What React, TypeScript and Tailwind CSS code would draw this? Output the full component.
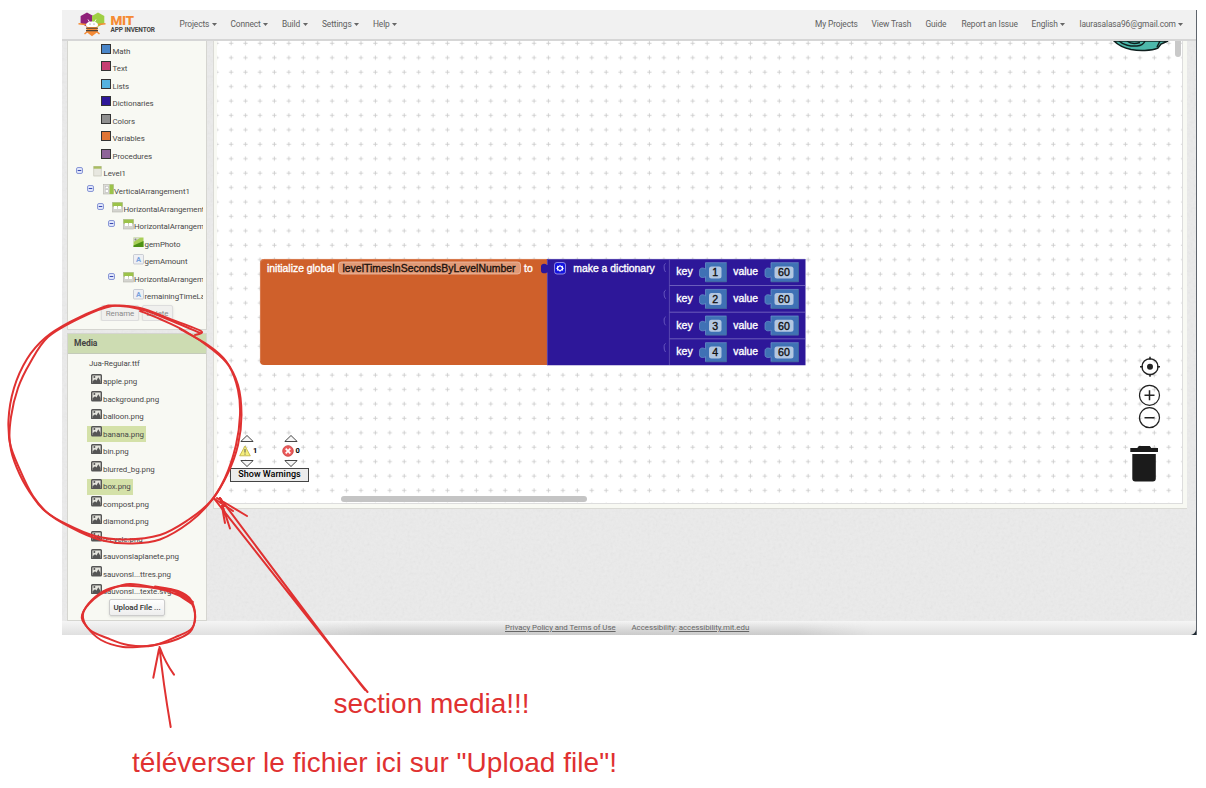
import React from "react";

type Pt = [number, number];

function smooth(p: Pt[]): string {
  let d = `M${p[0][0]} ${p[0][1]}`;
  for (let i = 0; i < p.length - 1; i++) {
    const a = p[i - 1] || p[i];
    const b = p[i];
    const c = p[i + 1];
    const e = p[i + 2] || c;
    d += `C${b[0] + (c[0] - a[0]) / 6} ${b[1] + (c[1] - a[1]) / 6} ${c[0] - (e[0] - b[0]) / 6} ${c[1] - (e[1] - b[1]) / 6} ${c[0]} ${c[1]}`;
  }
  return d;
}

const Caret = () => (
  <svg width="5" height="3" viewBox="0 0 5 3" className="ml-[2.5px] mt-px shrink-0">
    <path d="M0 0h5L2.5 3z" fill="#666" />
  </svg>
);

function NavItem({ label, width, caret }: { label: string; width: string; caret?: boolean }) {
  return (
    <div className={`flex shrink-0 items-center whitespace-nowrap ${width}`}>
      <span>{label}</span>
      {caret && <Caret />}
    </div>
  );
}

function Logo() {
  return (
    <svg width="28" height="25" viewBox="0 0 28 25" className="shrink-0">
      <path d="M9 .5 15.3 4v7.3L9 14.8l-6.400-3.500V4z" fill="#8f2079" />
      <path d="M20 .5 26.300 4v7.300L20 14.800l-6-3.500V4z" fill="#9fcf43" />
      <path d="M.5 11.800 8 12.500M27.500 11.800 20 12.500M6.500 22l3-2.500M21.500 22l-3-2.500" stroke="#f58a34" strokeWidth="1.500" />
      <path d="M8.500 13h11v7L14 24.300 8.500 20z" fill="#f58a34" />
      <path d="M8 13c0-2 2.500-3.500 6-3.500s6 1.500 6 3.500c0 1-1 2-2 2h-8c-1 0-2-1-2-2z" fill="#fff" />
      <path d="M11.500 10 10 7.500M16.500 10 18 7.500" stroke="#fff" strokeWidth=".9" />
      <path d="M8 16.200h12M8 18.600h12" stroke="#4d4439" strokeWidth="1.100" />
      <circle cx="12" cy="12" r=".5" fill="#555" />
      <circle cx="16" cy="12" r=".5" fill="#555" />
    </svg>
  );
}

function Header() {
  return (
    <header className="relative z-10 flex h-[30.5px] shrink-0 items-center border-b-2 border-[#d6d6d6] bg-[#f1f1f1] text-[8.400px] tracking-[-0.120px] text-[#606060]">
      <div className="flex w-[117.500px] shrink-0 items-start pl-[16px]">
        <Logo />
        <div className="ml-[4.500px] flex flex-col">
          <span className="mt-[3px] text-[13.500px] font-black leading-[11px] tracking-[-0.4px] text-[#f58a34]">MIT</span>
          <span className="whitespace-nowrap text-[6.500px] font-bold leading-[8px] text-[#444]">APP INVENTOR</span>
        </div>
      </div>
      <NavItem label="Projects" width="w-[51px]" caret />
      <NavItem label="Connect" width="w-[51.500px]" caret />
      <NavItem label="Build" width="w-[40px]" caret />
      <NavItem label="Settings" width="w-[51px]" caret />
      <NavItem label="Help" width="w-[30px]" caret />
      <div className="flex-1" />
      <NavItem label="My Projects" width="w-[56.500px]" />
      <NavItem label="View Trash" width="w-[54px]" />
      <NavItem label="Guide" width="w-[36px]" />
      <NavItem label="Report an Issue" width="w-[70px]" />
      <NavItem label="English" width="w-[48px]" caret />
      <NavItem label="laurasalasa96@gmail.com" width="w-[116.500px]" caret />
    </header>
  );
}

const Collapse = () => (
  <svg width="7" height="7" viewBox="0 0 7 7" className="mt-[1px] shrink-0">
    <rect x=".5" y=".5" width="6" height="6" rx="1.500" fill="#dfe5fa" stroke="#8a98d6" />
    <path d="M1.700 3.500h3.600" stroke="#3b4bb0" />
  </svg>
);

function TreeIcon({ kind }: { kind: string }) {
  return (
    <svg width="11" height="11" viewBox="0 0 11 11" className="shrink-0">
      {kind === "screen" && (
        <g>
          <rect x="1.800" y=".5" width="7.400" height="9.500" fill="#e7e7e0" stroke="#bdbdb0" strokeWidth=".6" />
          <rect x="1.600" y=".3" width="7.800" height="2.400" fill="#a9bd60" />
        </g>
      )}
      {kind === "vertical" && (
        <g>
          <rect x=".5" y=".5" width="10" height="9.500" fill="#dcdcd8" stroke="#b5b5ad" strokeWidth=".6" />
          <rect x="6.500" y=".5" width="4" height="9.500" fill="#9cc34a" />
          <rect x="2.300" y="2.200" width="3" height="2.500" fill="#fff" stroke="#aaa" strokeWidth=".4" />
          <rect x="2.300" y="5.800" width="3" height="2.500" fill="#fff" stroke="#aaa" strokeWidth=".4" />
        </g>
      )}
      {kind === "horizontal" && (
        <g>
          <rect x=".5" y=".5" width="10" height="9.500" fill="#d4d4cf" stroke="#b5b5ad" strokeWidth=".6" />
          <rect x=".5" y=".5" width="10" height="4" fill="#9cc34a" />
          <rect x="2" y="4" width="3" height="3" fill="#fff" />
          <rect x="6" y="4" width="3" height="3" fill="#fff" />
        </g>
      )}
      {kind === "image" && (
        <g>
          <rect x=".5" y=".5" width="10" height="9.500" fill="#a9cf58" />
          <path d="M.5 .5h7L.5 5z" fill="#d8dcd2" />
          <circle cx="2.500" cy="2.500" r="1" fill="#888" />
          <path d="M.5 8.500 10.500 4v6H.5z" fill="#4d9116" />
        </g>
      )}
      {kind === "label" && (
        <g>
          <rect x=".5" y=".5" width="10" height="9.500" rx="1" fill="#eef0f4" stroke="#b9bcc4" strokeWidth=".7" />
          <text x="5.500" y="8" textAnchor="middle" fontSize="7.500" fontWeight="700" fill="#7aa2dd" fontFamily="Roboto, sans-serif">A</text>
        </g>
      )}
    </svg>
  );
}

const drawers = [
  { name: "Math", color: "bg-[#4a86c8]" },
  { name: "Text", color: "bg-[#c73e72]" },
  { name: "Lists", color: "bg-[#54b2e0]" },
  { name: "Dictionaries", color: "bg-[#2d1799]" },
  { name: "Colors", color: "bg-[#8f8f8f]" },
  { name: "Variables", color: "bg-[#e07534]" },
  { name: "Procedures", color: "bg-[#8e6399]" },
];

const tree = [
  { name: "Level1", kind: "screen", pad: "pl-[8px]", gap: "gap-[9px]", open: true },
  { name: "VerticalArrangement1", kind: "vertical", pad: "pl-[18.500px]", gap: "gap-[9px]", open: true },
  { name: "HorizontalArrangement1", kind: "horizontal", pad: "pl-[29px]", gap: "gap-[8px]", open: true },
  { name: "HorizontalArrangement2", kind: "horizontal", pad: "pl-[39.500px]", gap: "gap-[8px]", open: true },
  { name: "gemPhoto", kind: "image", pad: "pl-[65px]", gap: "", open: false },
  { name: "gemAmount", kind: "label", pad: "pl-[65px]", gap: "", open: false },
  { name: "HorizontalArrangement3", kind: "horizontal", pad: "pl-[39.500px]", gap: "gap-[8px]", open: true },
  { name: "remainingTimeLabel", kind: "label", pad: "pl-[65px]", gap: "", open: false },
];

const media = [
  "apple.png", "background.png", "balloon.png", "banana.png", "bin.png", "blurred_bg.png", "box.png",
  "compost.png", "diamond.png", "recycle.png", "sauvonslaplanete.png", "sauvonsl...ttres.png", "sauvonsl...texte.svg",
];

const FileIcon = () => (
  <svg width="11" height="10.500" viewBox="0 0 11 10.500" className="shrink-0">
    <rect x=".7" y=".7" width="9.600" height="9.100" rx=".8" fill="#e4e4dd" stroke="#555" strokeWidth="1.400" />
    <path d="M1.500 9V7.200l2.500-2L5.500 6.500 7.300 3.300 9.500 7v2z" fill="#555" />
    <circle cx="3.400" cy="3.100" r="1" fill="#555" />
  </svg>
);

function Sidebar() {
  return (
    <aside className="ml-[5px] flex h-[580px] w-[140px] shrink-0 flex-col text-[7.900px] tracking-[-0.050px] text-[#484848]">
      <section className="h-[289px] w-full overflow-hidden border-x border-b border-[#d5d5d0] bg-[#f8f9f3] pt-[1.500px]">
        <div className="w-[135px] overflow-hidden">
          {drawers.map((d) => (
            <div key={d.name} className="flex h-[17.570px] items-start pl-[33px]">
              <span className={`mt-[1.500px] size-[10px] shrink-0 border border-[#333] ${d.color}`} />
              <span className="ml-[1.500px] mt-[4.500px] leading-[10px]">{d.name}</span>
            </div>
          ))}
          {tree.map((t) => (
            <div key={t.name} className={`flex h-[17.570px] items-start ${t.pad}`}>
              <div className={`mt-[1.500px] flex items-start ${t.gap}`}>
                {t.open && <Collapse />}
                <TreeIcon kind={t.kind} />
              </div>
              <span className="mt-[4.500px] whitespace-nowrap pl-[0.500px] leading-[10px]">{t.name}</span>
            </div>
          ))}
          <div className="flex gap-[3px] pl-[33px] text-[#8a8a8a]">
            <button className="h-[16px] w-[38px] rounded-[2px] border border-[#ddd] bg-[#f0f0ee] shadow-sm">Rename</button>
            <button className="h-[16px] w-[31px] rounded-[2px] border border-[#ddd] bg-[#f0f0ee] shadow-sm">Delete</button>
          </div>
        </div>
      </section>
      <section className="mt-[3px] flex flex-1 flex-col border border-[#d5d5d0] bg-[#f8f9f3]">
        <h2 className="flex h-[20px] shrink-0 items-center border-b border-[#c4cbb9] bg-[#cddcb2] pl-[6px] text-[8.500px] font-bold text-[#444]">Media</h2>
        <div className="pt-[2.500px]">
          <div className="h-[17.540px] pl-[21px] pt-[3px] leading-[10px]">Jua-Regular.ttf</div>
          {media.map((m) => (
            <div key={m} className="flex h-[17.540px] pl-[19px]">
              <div className={`flex h-[16px] items-start gap-[1.500px] pl-[3.500px] pr-[2.500px] ${m === "banana.png" || m === "box.png" ? "bg-[#d4e1a8]" : ""}`}>
                <FileIcon />
                <span className="mt-[3.500px] whitespace-nowrap leading-[10px]">{m}</span>
              </div>
            </div>
          ))}
        </div>
        <button className="ml-[41px] mt-[-2px] h-[17px] w-[56px] rounded-[2px] border border-[#ccc] bg-linear-to-b from-[#fefefe] to-[#eee] font-medium text-[#333] shadow-sm">Upload File ...</button>
      </section>
    </aside>
  );
}

const rowsY = [0, 26.700, 53.300, 80];

function Label({ x, y, w, children, fill = "#fff" }: { x: number; y: number; w: number; children: string; fill?: string }) {
  return (
    <text x={x} y={y} textLength={w} lengthAdjust="spacingAndGlyphs" fill={fill} stroke={fill} strokeWidth=".35">
      {children}
    </text>
  );
}

function NumberBlock({ x, y, w, value }: { x: number; y: number; w: number; value: string }) {
  return (
    <g>
      <path d={`M${x} ${y}h${w}v19h${-w}v-5c-2 1.500-6 1-6-1.500v-4.500c0-3 4-3.500 6-1.500z`} fill="#3f71b5" stroke="#6f98cc" strokeWidth=".7" />
      <path d={`M${x + w} ${y}v19h${-w}`} fill="none" stroke="#2c5287" strokeWidth=".6" />
      <rect x={x + 3.500} y={y + 3.700} width={w - 8.500} height="12" rx="2.500" fill="#b2c6e1" />
      <Label x={x + 3.500 + (w - 8.500) / 2 - (value.length * 5.900) / 2} y={y + 13.500} w={value.length * 5.900} fill="#111">{value}</Label>
    </g>
  );
}

function Blocks() {
  return (
    <svg width="547" height="108" viewBox="259 258 547 108" className="absolute left-[42px] top-[217.500px]" fontFamily="'Liberation Sans', Arial, sans-serif" fontSize="10.600">
      <path d="M547 259H264q-4 0-4 4v98q0 4 4 4h283z" fill="#cf602b" />
      <path d="M260.400 361v-98q0-3.600 4-3.600h282" fill="none" stroke="#dc8a63" strokeWidth=".7" />
      <rect x="338.500" y="262" width="182" height="12" rx="3" fill="#e19a77" stroke="#eebfa8" strokeWidth=".8" />
      <path d="M547 259H805.500V365.200H547V272.500c-2 1.500-6 1-6-1.500v-4.500c0-3 4-3.500 6-1.500z" fill="#2d1799" />
      <path d="M547.400 365V272.500M547.400 265v-5.600H805M669.400 365V259.500" fill="none" stroke="#6252b6" strokeWidth=".8" />
      <path d="M669.500 285.500H805M669.500 312.200H805M669.500 338.800H805" stroke="#7365be" strokeWidth=".9" />
      <Label x={267} y={271.800} w={67.500}>initialize global</Label>
      <Label x={342.500} y={271.800} w={173} fill="#1c120d">levelTimesInSecondsByLevelNumber</Label>
      <Label x={524} y={271.800} w={8.700}>to</Label>
      <Label x={573.300} y={271.800} w={81.500}>make a dictionary</Label>
      <rect x="554.500" y="262.500" width="11" height="11.500" rx="2.500" fill="#1414e0" stroke="#9b94e8" strokeWidth=".9" />
      <path d="M560 264.700l1 1.300 1.700-.2.300 1.700.9.800-.9.900-.3 1.600-1.700-.2-1 1.300-1-1.300-1.700.2-.3-1.600-.9-.9.900-.8.300-1.700 1.700.2z" fill="#fff" />
      <circle cx="560" cy="268.200" r="1.700" fill="#1414e0" />
      {rowsY.map((dy, i) => (
        <g key={dy}>
          <path d={`M665.700 ${263.500 + dy}c-2 1-1.500 3-1.500 4.500s.5 3 1.500 4`} fill="none" stroke="#6f60c2" strokeWidth=".9" />
          <Label x={676.300} y={275.400 + dy} w={16.500}>key</Label>
          <NumberBlock x={705.500} y={262.700 + dy} w={21} value={`${i + 1}`} />
          <Label x={733.300} y={275.400 + dy} w={24.800}>value</Label>
          <NumberBlock x={771} y={262.700 + dy} w={27.500} value="60" />
        </g>
      ))}
    </svg>
  );
}

const Tri = ({ down }: { down?: boolean }) => (
  <svg width="14" height="7" viewBox="0 0 14 7" className="block">
    <path d={down ? "M.8 .5h12.400L7 6.500z" : "M.8 6.500h12.400L7 .5z"} fill="#f6f6f6" stroke="#333" strokeWidth=".9" />
  </svg>
);

function Warnings() {
  return (
    <div className="absolute left-[13px] top-[394px] w-[79px] text-black">
      <div className="flex gap-[24px] pl-[9.500px]">
        <div className="flex w-[20px] flex-col gap-[1.500px]">
          <Tri />
          <div className="-ml-px flex h-[15px] items-center gap-[2.500px]">
            <svg width="12" height="12" viewBox="0 0 12 12" className="shrink-0">
              <path d="M6 1 11.300 10.800H.7z" fill="#f5ee7a" stroke="#c3b74c" strokeWidth=".9" strokeLinejoin="round" />
              <path d="M6 4v3.600M6 8.600v1" stroke="#555" strokeWidth="1" />
            </svg>
            <span className="pt-px text-[7.500px] font-bold">1</span>
          </div>
          <Tri down />
        </div>
        <div className="flex w-[20px] flex-col gap-[1.500px]">
          <Tri />
          <div className="-ml-[2px] flex h-[15px] items-center gap-[2px]">
            <svg width="12" height="12" viewBox="0 0 12 12" className="shrink-0">
              <circle cx="6" cy="6" r="5.300" fill="#ec5a5a" stroke="#c74343" strokeWidth=".8" />
              <path d="M3.700 3.700l4.600 4.600M8.300 3.700 3.700 8.300" stroke="#fff" strokeWidth="1.700" />
            </svg>
            <span className="pt-px text-[7.500px] font-bold">0</span>
          </div>
          <Tri down />
        </div>
      </div>
      <button className="mt-px flex h-[14px] w-[79px] items-center justify-center whitespace-nowrap border border-[#444] bg-[#ececec] text-[9px] font-medium">Show Warnings</button>
    </div>
  );
}

function Workspace() {
  return (
    <main className="ml-[6px] h-[468px] w-[974px] border-b border-l border-[#dadad5] bg-[#f8f9f3] pl-[3px]">
      <div className="relative h-[463.500px] w-[966px] overflow-hidden border-b border-r border-[#ddd] bg-white">
        <svg width="966" height="464" className="block">
          <defs>
            <pattern id="grid" x="7" y="9.700" width="14.425" height="14.425" patternUnits="userSpaceOnUse">
              <path d="M5 7h4.200M7.100 4.900v4.200" stroke="#cccccc" strokeWidth=".9" />
            </pattern>
          </defs>
          <rect width="966" height="464" fill="url(#grid)" />
        </svg>
        <svg width="58" height="12" viewBox="0 0 58 12" className="absolute left-[896px] top-0">
          <path d="M1 0c4 4 10 7 17 8.500 8 1.500 20 1.500 27-1.500l3-4 7-3z" fill="#4db8ab" stroke="#101f1e" strokeWidth="1.500" />
          <path d="M6 0c4 4 12 5.500 18 5 5-.5 7-2.500 8-5M14 0c3 2.500 8 3 13 1.500M44 6l3-6" fill="none" stroke="#101f1e" strokeWidth="1.500" />
        </svg>
        <div className="absolute left-[958px] top-[-20px] h-[36px] w-[6px] rounded-full bg-[#c9c9c9]" />
        <Blocks />
        <Warnings />
        <div className="absolute left-[124px] top-[455px] h-[6px] w-[246px] rounded-full bg-[#c4c4c4]" />
        <svg width="34" height="128" viewBox="1129 356 34 128" className="absolute left-[912px] top-[315px]" fill="none" stroke="#222">
          <circle cx="1150" cy="366.700" r="8" strokeWidth="1.400" />
          <path d="M1150 356.800v3M1150 373.800v3M1140 366.700h3M1157 366.700h3" strokeWidth="1.500" />
          <circle cx="1150" cy="366.700" r="3" fill="#222" stroke="none" />
          <circle cx="1149.500" cy="395.300" r="10" strokeWidth="1.200" />
          <path d="M1144.500 395.300h10M1149.500 390.300v10M1144.500 417.700h10" strokeWidth="1.500" />
          <circle cx="1149.500" cy="417.700" r="10" strokeWidth="1.200" />
          <path d="M1130.300 448h7l1.500-2h11l1.500 2h6.700v4h-27.700zM1132.300 454h23.500v24.500q0 3-3 3h-17.500q-3 0-3-3z" fill="#1b1b1b" stroke="none" />
        </svg>
      </div>
    </main>
  );
}

const ringA: Pt[] = [[200, 333], [172, 321], [142, 309.500], [115, 305.500], [101, 308], [70, 322], [45, 338], [27, 359], [14, 388], [8.500, 420], [11, 450], [20, 475], [33, 497], [45, 511], [66, 524], [95, 536], [125, 539.500], [160, 535], [188, 520], [210, 502], [225, 478], [236, 445], [240, 415], [238, 390], [229, 366], [213, 350], [185, 331], [160, 319], [140, 311]];
const ringB: Pt[] = [[195, 335], [201, 331], [170, 319], [140, 308], [112, 306], [80, 318], [48, 337], [30, 363], [18, 388], [11, 417], [10, 443], [20, 470], [33, 496], [50, 515], [80, 532], [105, 541], [132, 543.500], [160, 539.500], [190, 522], [212, 500], [228, 473], [238, 445], [241.500, 415], [238, 385], [226, 361], [208, 345], [180, 329]];
const ovalA: Pt[] = [[193, 602], [181, 593], [158, 588], [130, 584], [111, 589], [94, 599], [82, 615], [87, 627], [101, 640], [123, 647], [147, 646], [172, 641], [190, 632], [195, 617], [191, 600], [178, 591], [155, 586.500]];
const ovalB: Pt[] = [[192, 604], [178, 595], [160, 589], [133, 586], [115, 587], [99, 594], [86, 607], [83, 618], [90, 630], [107, 638], [128, 645], [153, 645.500], [178, 636], [192, 628], [195, 613], [188, 599], [170, 589]];

function Annotations() {
  return (
    <svg width="1206" height="788" viewBox="0 0 1206 788" className="pointer-events-none absolute left-0 top-0 z-20" fill="none" stroke="#e03131" strokeWidth="2" strokeLinecap="round" strokeLinejoin="round">
      <path d={smooth(ringA)} />
      <path d={smooth(ringB)} />
      <path d={smooth(ovalA)} />
      <path d={smooth(ovalB)} />
      <path d="M367.500 692Q330 646 214 498.500M365 690Q326 640 220 498" />
      <path d="M217 498 247 516M214 498.500 233 511M220 498 230 528.500M221 499Q223 513 225 523" />
      <path d="M159.500 647Q163 682 170.700 727M159 649 153.300 677.700M160 648Q165 662 174 674.700" />
    </svg>
  );
}

export default function App() {
  return (
    <div className="relative h-[788px] w-[1206px] overflow-hidden bg-white pl-[62px] pt-[10px] font-['Roboto',sans-serif]">
      <div className="relative flex h-[625px] w-[1135px] flex-col overflow-hidden border-r-[1.500px] border-[#5e646c] bg-[#ebebeb]">
        <svg width="1135" height="625" className="absolute left-0 top-0 opacity-10">
          <filter id="paper">
            <feTurbulence type="fractalNoise" baseFrequency=".35" numOctaves="2" />
            <feColorMatrix type="saturate" values="0" />
          </filter>
          <rect width="1135" height="625" filter="url(#paper)" />
        </svg>
        <Header />
        <div className="relative flex h-[580px] shrink-0 items-start">
          <Sidebar />
          <Workspace />
        </div>
        <footer className="relative flex flex-1 items-center bg-linear-to-b from-[#f5f5f5] to-[#e0e0e0] pl-[443px] text-[7.900px] tracking-[-0.050px] text-[#666]">
          <div className="absolute left-[190px] top-0 h-full w-[620px] bg-linear-to-b from-transparent to-[#bdbdbd] opacity-60 [mask-image:linear-gradient(90deg,transparent,black_20%,black_88%,transparent)]" />
          <span className="relative w-[126.500px] whitespace-nowrap"><span className="underline">Privacy Policy and Terms of Use</span></span>
          <span className="relative whitespace-nowrap">Accessibility: <span className="underline">accessibility.mit.edu</span></span>
          <svg width="5" height="5" viewBox="0 0 5 5" className="absolute bottom-0 right-0"><path d="M5 0v5H0Q4 4 5 0z" fill="#1c2730" /></svg>
        </footer>
      </div>
      <div className="pl-[70px] pt-[52px] font-['Liberation_Sans',Arial,sans-serif] text-[28px] leading-[34px] text-[#e03131]">
        <p className="pl-[201.500px]">section media!!!</p>
        <p className="mt-[25px] tracking-[0.030px]">téléverser le fichier ici sur "Upload file"!</p>
      </div>
      <Annotations />
    </div>
  );
}
